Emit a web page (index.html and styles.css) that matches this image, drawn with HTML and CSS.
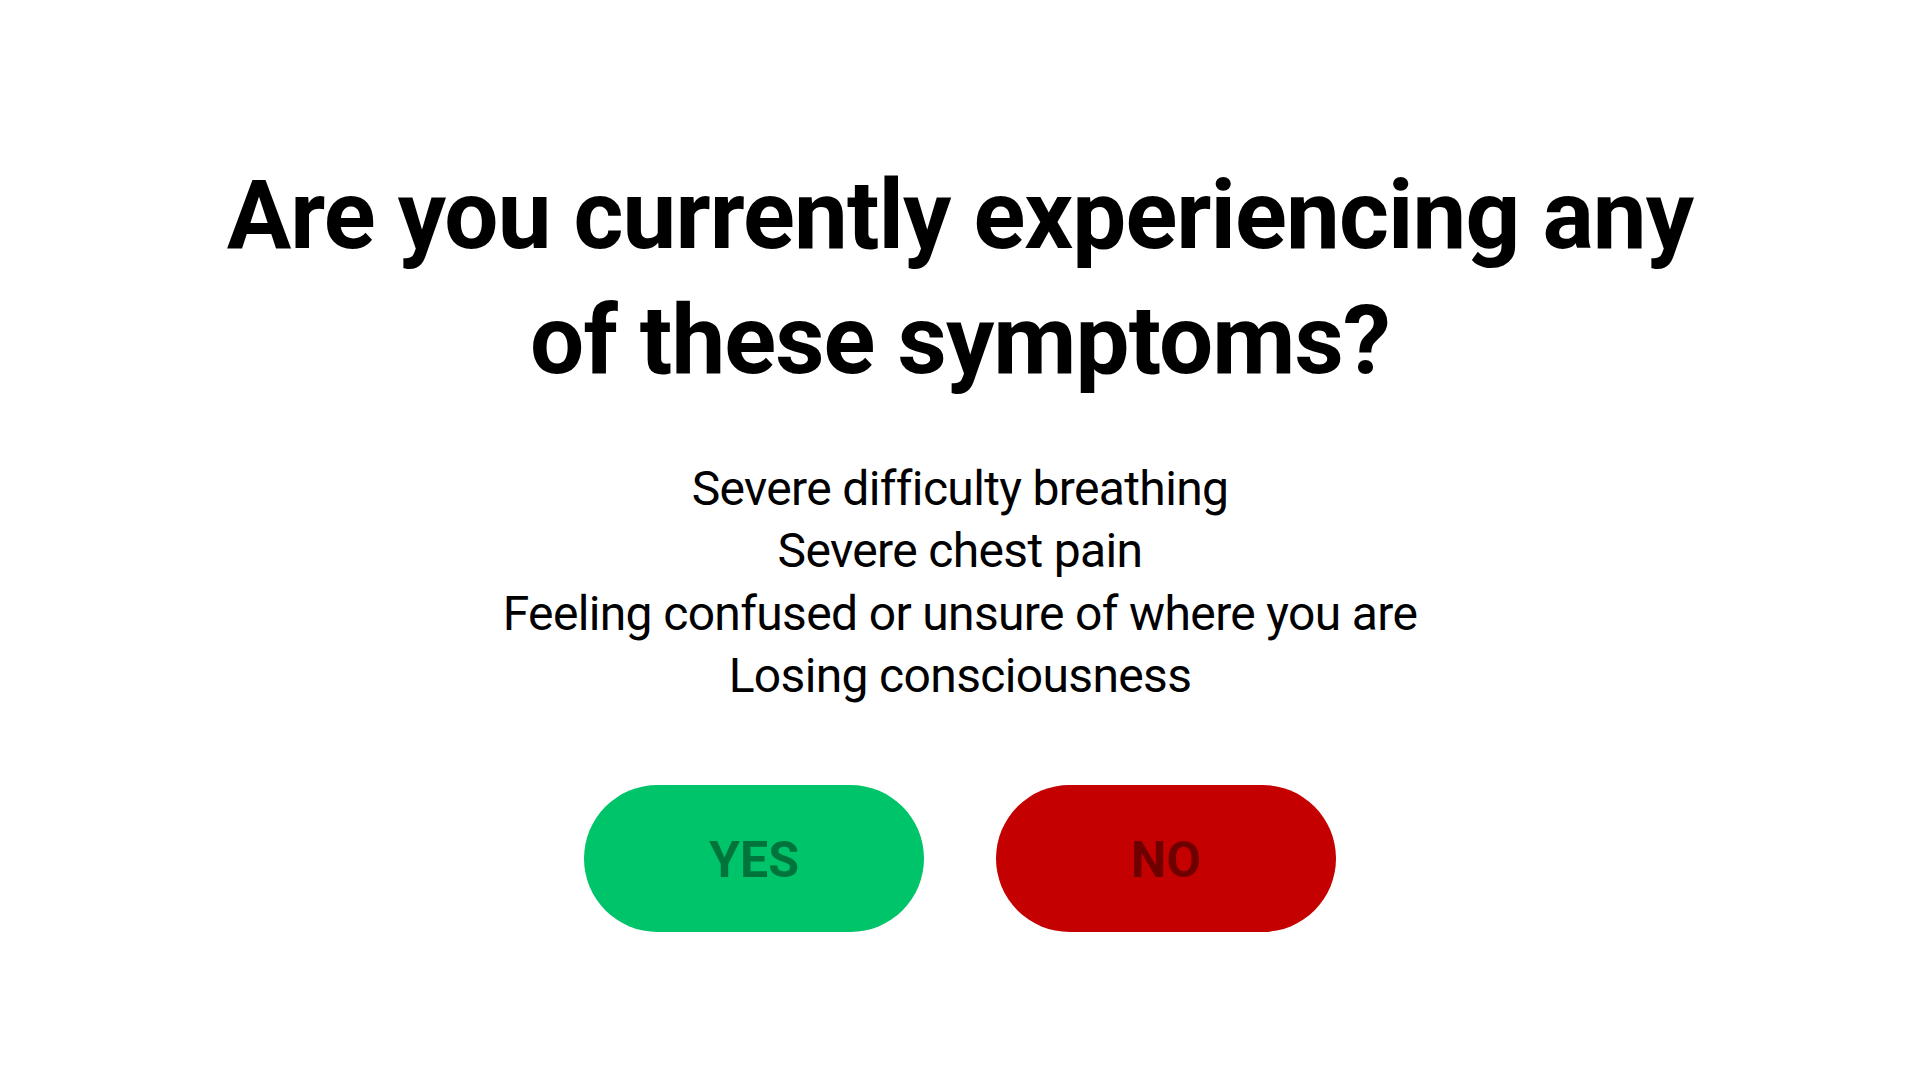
FILE: index.html
```html
<!DOCTYPE html>
<html lang="en">
<head>
<meta charset="utf-8">
<title>Symptom check</title>
<link rel="stylesheet" href="styles.css">
</head>
<body>
<main class="screen">
  <h1 class="question">Are you currently experiencing any of these symptoms?</h1>
  <ul class="symptoms">
    <li>Severe difficulty breathing</li>
    <li>Severe chest pain</li>
    <li>Feeling confused or unsure of where you are</li>
    <li>Losing consciousness</li>
  </ul>
  <div class="answers">
    <button class="answer answer-yes" type="button">YES</button>
    <button class="answer answer-no" type="button">NO</button>
  </div>
</main>
</body>
</html>
```
FILE: styles.css
```css
html, body {
  margin: 0;
  padding: 0;
  background: #ffffff;
}

body {
  font-family: Roboto, "Noto Sans", sans-serif;
  color: #000000;
}

.screen {
  display: flex;
  flex-direction: column;
  align-items: center;
  padding-top: 153px;
}

.question {
  margin: 0;
  max-width: 1540px;
  font-size: 96px;
  line-height: 125px;
  font-weight: 700;
  text-align: center;
  letter-spacing: -0.9px;
}

.symptoms {
  list-style: none;
  margin: 55px 0 0;
  padding: 0;
  text-align: center;
  font-size: 48px;
  line-height: 62.4px;
  font-weight: 400;
  letter-spacing: -0.65px;
}

.answers {
  display: flex;
  gap: 72px;
  margin-top: 77px;
}

.answer {
  width: 340px;
  height: 147px;
  border: none;
  border-radius: 74px;
  font-family: Roboto, "Noto Sans", sans-serif;
  font-size: 50px;
  font-weight: 700;
  padding: 4px 0 0;
  cursor: pointer;
}

.answer-yes {
  background: #00c46a;
  color: #00743a;
}

.answer-no {
  background: #c40000;
  color: #6e0000;
}
```
